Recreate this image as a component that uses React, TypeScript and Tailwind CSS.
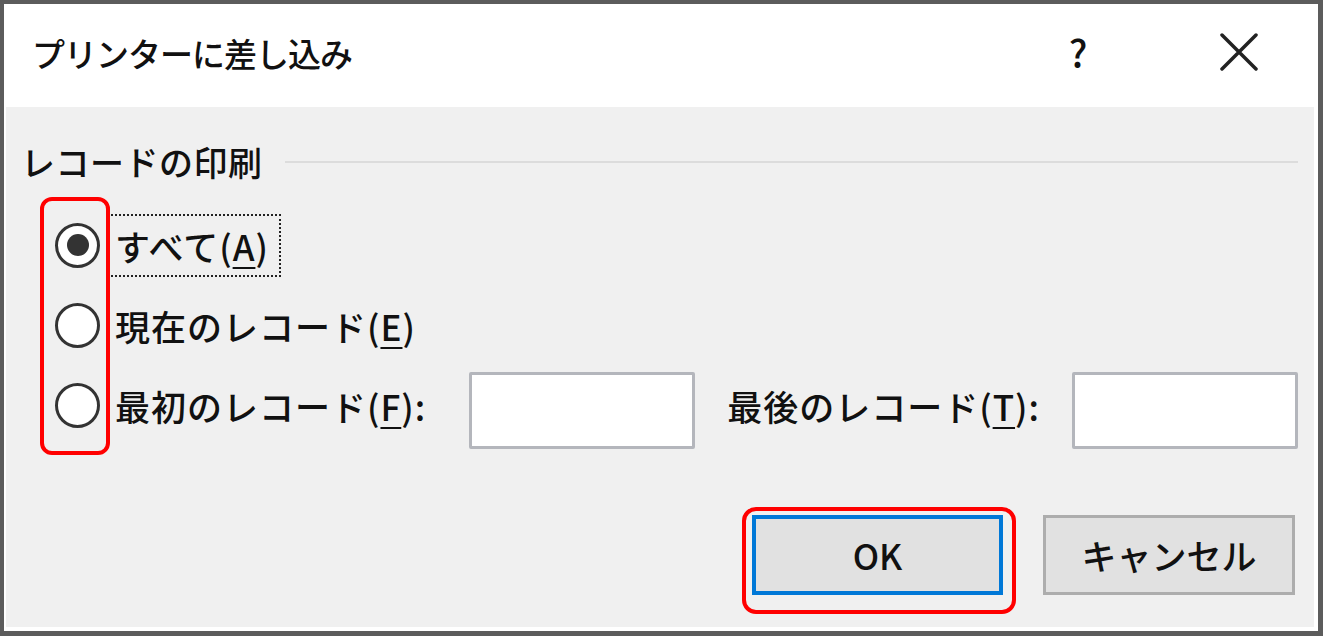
import React from 'react';

const font = "font-['Noto_Sans_CJK_JP','Noto_Sans',sans-serif]";

function Radio({ checked }: { checked?: boolean }) {
  return (
    <div className="w-[45px] h-[45px] rounded-full border-[3px] border-[#333333] bg-white flex items-center justify-center shrink-0">
      {checked && <div className="w-[22px] h-[22px] rounded-full bg-[#333333]" />}
    </div>
  );
}

function Mn({ c }: { c: string }) {
  return <span className="underline decoration-2 underline-offset-[6px]">{c}</span>;
}

function TextBox() {
  return <div className="w-[226px] h-[77px] bg-white border-[3px] border-[#b4b6bc] rounded-[2px] shrink-0" />;
}

export default function App() {
  return (
    <div className={`relative w-[1323px] h-[636px] bg-[#5c5c5c] pl-[4px] pt-[4px] pr-[5px] pb-[5px] text-[#111] font-medium ${font}`}>
      <div className="w-full h-full bg-white pl-[2px] pr-[4px] pb-[4px] flex flex-col">
        {/* title bar */}
        <div className="h-[103px] flex items-center shrink-0">
          <div className="pl-[26px] text-[33px] leading-none tracking-[-1px] pb-[4px]">プリンターに差し込み</div>
          <div className="ml-auto w-[60px] text-center text-[38px] leading-none pb-[8px] mr-[112px]">?</div>
          <div className="mr-[56px] pb-[8px]">
            <svg width="38" height="38" viewBox="0 0 38 38">
              <path d="M2 2 L36 36 M36 2 L2 36" stroke="#222" strokeWidth="3.5" strokeLinecap="round" />
            </svg>
          </div>
        </div>

        {/* body */}
        <div className="flex-1 bg-[#f0f0f0] flex flex-col pl-[15px] pr-[16px]">
          <div className="mt-[37px] flex items-center h-[36px]">
            <span className="text-[34px] leading-none tracking-[0.5px]">レコードの印刷</span>
            <div className="flex-1 ml-[22px] h-[2px] bg-[#dcdcdc]" />
          </div>

          <div className="mt-[25px] pl-[34px] flex flex-col text-[35px] tracking-[1px]">
            <div className="h-[80px] flex items-center">
              <Radio checked />
              <div className="ml-[7px] border-2 border-dotted border-[#222] pl-[6px] pr-[10px] h-[63px] flex items-center">
                <span className="leading-none">すべて(<Mn c="A" />)</span>
              </div>
            </div>
            <div className="h-[80px] flex items-center">
              <Radio />
              <span className="ml-[15px] leading-none">現在のレコード(<Mn c="E" />)</span>
            </div>
            <div className="h-[80px] flex items-center">
              <Radio />
              <span className="ml-[15px] leading-none">最初のレコード(<Mn c="F" />):</span>
              <div className="ml-[43px] mt-[10px]"><TextBox /></div>
              <span className="ml-[32px] leading-none">最後のレコード(<Mn c="T" />):</span>
              <div className="ml-auto mt-[10px]"><TextBox /></div>
            </div>
          </div>

          <div className="mt-[70px] flex justify-end gap-[40px] pr-[3px]">
            <button className="w-[251px] h-[80px] bg-[#e1e1e1] border-[4px] border-[#0078d7] text-[35px] leading-none pb-[2px]">OK</button>
            <button className="w-[252px] h-[80px] bg-[#e1e1e1] border-[3px] border-[#adadad] text-[35px] leading-none pb-[2px]">キャンセル</button>
          </div>
        </div>
      </div>

      {/* annotation highlights */}
      <div className="absolute left-[40px] top-[197px] w-[70px] h-[258px] border-[4px] border-[#ff0000] rounded-[12px]" />
      <div className="absolute left-[742px] top-[507px] w-[274px] h-[107px] border-[4px] border-[#ff0000] rounded-[14px]" />
    </div>
  );
}
